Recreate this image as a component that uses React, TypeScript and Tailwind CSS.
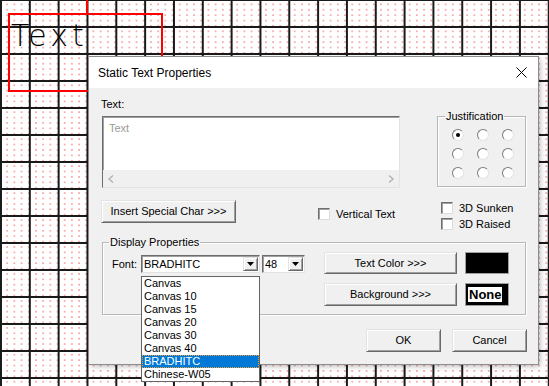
import React from 'react';

const fonts = ['Canvas', 'Canvas 10', 'Canvas 15', 'Canvas 20', 'Canvas 30', 'Canvas 40', 'BRADHITC', 'Chinese-W05'];

function Radio({ checked }: { checked?: boolean }) {
    return (
        <span className="flex h-[12px] w-[12px] items-center justify-center rounded-full border border-t-[#7a7a7a] border-l-[#7a7a7a] border-r-[#e3e3e3] border-b-[#e3e3e3] bg-white">
            {checked && <span className="h-[4px] w-[4px] rounded-full bg-black" />}
        </span>
    );
}

function Check({ label }: { label: string }) {
    return (
        <div className="flex h-[16px] items-center gap-[6px]">
            <span className="h-[12px] w-[12px] border border-t-[#6d6d6d] border-l-[#6d6d6d] border-r-[#dcdcdc] border-b-[#dcdcdc] bg-white shadow-[inset_1px_1px_0_#a0a0a0]" />
            <span>{label}</span>
        </div>
    );
}

function Arrow() {
    return (
        <svg width="7" height="4" viewBox="0 0 7 4">
            <polygon points="0,0 7,0 3.5,4" fill="#000" />
        </svg>
    );
}

function DropBtn() {
    return (
        <span className="ml-auto flex h-[14px] w-[15px] items-center justify-center border border-t-[#e3e3e3] border-l-[#e3e3e3] border-r-[#696969] border-b-[#696969] bg-[#f0f0f0] shadow-[inset_1px_1px_0_#fff,inset_-1px_-1px_0_#a0a0a0]">
            <Arrow />
        </span>
    );
}

const btn =
    'flex items-center justify-center border border-t-[#e3e3e3] border-l-[#e3e3e3] border-r-[#696969] border-b-[#696969] bg-[#f0f0f0] shadow-[inset_1px_1px_0_#fff,inset_-1px_-1px_0_#a0a0a0]';

const sunken =
    'border border-t-[#6d6d6d] border-l-[#6d6d6d] border-r-[#e3e3e3] border-b-[#e3e3e3] bg-white shadow-[inset_1px_1px_0_#a0a0a0]';

export default function App() {
    return (
        <div className="relative h-[386px] w-[549px] overflow-hidden bg-white bg-[linear-gradient(to_right,#1a1a1a_0px,#1a1a1a_2px,transparent_2px),linear-gradient(to_bottom,#1a1a1a_0px,#1a1a1a_2px,transparent_2px),radial-gradient(circle,#f7a8a8_0px,#f7a8a8_0.6px,transparent_1.1px)] bg-[length:28.83px_27px,28.83px_27px,7.2px_5.4px] bg-[position:0px_0px,0px_-1px,-3.6px_-3.7px] font-['Liberation_Sans',Arial,sans-serif] text-[11px] text-black">
            {/* canvas object */}
            <div className="absolute left-[86px] top-0 h-[13px] w-[2px] bg-[#ff0000]" />
            <div className="absolute left-[8px] top-[13px] h-[79px] w-[155px] border-2 border-[#ff0000]" />
            <div className="absolute left-[11px] top-[21px] font-['DejaVu_Sans',sans-serif] text-[30px] font-light leading-none tracking-[4px] text-black">
                Text
            </div>

            {/* dialog */}
            <div className="absolute left-[89px] top-[57px] h-[307px] w-[449px] bg-[#f0f0f0] shadow-[0_0_0_1px_#8c8c8c,2px_2px_6px_rgba(0,0,0,0.3)]">
                <div className="flex h-[31px] items-center justify-between bg-white pl-[9px] pr-[11px]">
                    <span className="text-[12px]">Static Text Properties</span>
                    <svg width="11" height="11" viewBox="0 0 11 11">
                        <path d="M0.5 0.5 L10.5 10.5 M10.5 0.5 L0.5 10.5" stroke="#000" strokeWidth="1" />
                    </svg>
                </div>

                <div className="px-[12px] pt-[10px]">
                    <div className="flex justify-between">
                        <div className="flex flex-col">
                            <div className="h-[18px] leading-[13px]">Text:</div>
                            <div className={`ml-[1px] flex h-[72px] w-[298px] flex-col ${sunken}`}>
                                <div className="flex-1 px-[6px] pt-[3px] text-[11px] text-[#9a9a9a]">Text</div>
                                <div className="flex h-[17px] items-center justify-between bg-[#f0f0f0] px-[5px]">
                                    <svg width="6" height="8" viewBox="0 0 6 8">
                                        <path d="M5 0.5 L1 4 L5 7.5" stroke="#b0b0b0" strokeWidth="1.3" fill="none" />
                                    </svg>
                                    <svg width="6" height="8" viewBox="0 0 6 8">
                                        <path d="M1 0.5 L5 4 L1 7.5" stroke="#b0b0b0" strokeWidth="1.3" fill="none" />
                                    </svg>
                                </div>
                            </div>
                        </div>

                        <fieldset className="mt-[12px] h-[77px] w-[89px] border border-[#b8b8b8] shadow-[inset_1px_1px_0_#fff,1px_1px_0_#fff]">
                            <legend className="ml-[7px] px-[1px] leading-[12px]">Justification</legend>
                            <div className="grid grid-cols-[12px_12px_12px] gap-x-[13px] gap-y-[7px] pl-[14px] pt-[7px]">
                                {Array.from({ length: 9 }).map((_, i) => (
                                    <Radio key={i} checked={i === 0} />
                                ))}
                            </div>
                        </fieldset>
                    </div>

                    <div className="mt-[12px] flex h-[36px] items-start">
                        <div className={`h-[23px] w-[135px] ${btn}`}>Insert Special Char &gt;&gt;&gt;</div>
                        <div className="ml-[82px] mt-[6px] w-[123px]">
                            <Check label="Vertical Text" />
                        </div>
                        <div className="flex flex-col">
                            <Check label="3D Sunken" />
                            <Check label="3D Raised" />
                        </div>
                    </div>

                    <fieldset className="ml-[1px] h-[79px] w-[424px] border border-[#b8b8b8] shadow-[inset_1px_1px_0_#fff,1px_1px_0_#fff]">
                        <legend className="ml-[6px] px-[1px] leading-[13px]">Display Properties</legend>
                        <div className="flex items-start">
                            <div className="mt-[6px] flex w-[221px] items-center pl-[9px]">
                                <span className="w-[29px]">Font:</span>
                                <div className={`flex h-[18px] w-[119px] items-center pl-[2px] pr-[1px] ${sunken}`}>
                                    <span>BRADHITC</span>
                                    <DropBtn />
                                </div>
                                <div className={`ml-[2px] flex h-[18px] w-[43px] items-center pl-[2px] pr-[1px] ${sunken}`}>
                                    <span>48</span>
                                    <DropBtn />
                                </div>
                            </div>
                            <div className="mt-[3px] flex flex-col gap-[9px]">
                                <div className="flex gap-[8px]">
                                    <div className={`h-[22px] w-[133px] ${btn}`}>Text Color &gt;&gt;&gt;</div>
                                    <div className="h-[22px] w-[44px] border border-[#a0a0a0] bg-black" />
                                </div>
                                <div className="flex gap-[8px]">
                                    <div className={`h-[23px] w-[133px] ${btn}`}>Background &gt;&gt;&gt;</div>
                                    <div className="h-[23px] w-[44px] border border-[#a0a0a0] bg-black pl-[2px] pt-[3px]">
                                        <span className="block w-[34px] bg-white px-[1px] text-[13px] font-bold leading-[15px]">None</span>
                                    </div>
                                </div>
                            </div>
                        </div>
                    </fieldset>

                    <div className="mt-[14px] flex justify-end gap-[11px]">
                        <div className={`h-[23px] w-[75px] ${btn} border-black`}>OK</div>
                        <div className={`-mr-[1px] h-[23px] w-[75px] ${btn}`}>Cancel</div>
                    </div>
                </div>
            </div>

            {/* open font dropdown */}
            <div className="absolute left-[141px] top-[276px] w-[119px] border border-[#646464] bg-white">
                {fonts.map((f) => (
                    <div
                        key={f}
                        className={
                            f === 'BRADHITC'
                                ? 'h-[13px] bg-[#0078d7] px-[2px] leading-[13px] text-white outline-1 -outline-offset-1 outline-dotted outline-[#f0a030]'
                                : 'h-[13px] px-[2px] leading-[13px]'
                        }
                    >
                        {f}
                    </div>
                ))}
            </div>
        </div>
    );
}
